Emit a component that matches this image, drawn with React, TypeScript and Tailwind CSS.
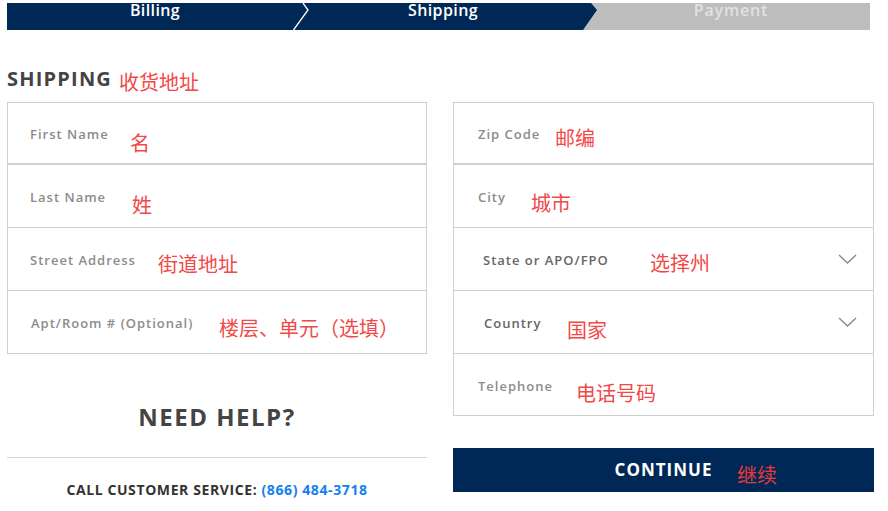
import React from 'react';

const font = { fontFamily: '"Open Sans", "Noto Sans CJK SC", sans-serif' };
const cnFont = { fontFamily: '"Noto Sans CJK SC", sans-serif' };

type Field = {
  label: string;
  cn: string;
  labelW: string;
  shift: string;
  rowClass: string;
  pad: string;
  dark?: boolean;
  select?: boolean;
};

const leftFields: Field[] = [
  { label: 'First Name', cn: '名', labelW: 'w-[100px]', shift: 'translate-y-[10px]', rowClass: 'h-[62px] border-b-2', pad: 'pl-[22px]' },
  { label: 'Last Name', cn: '姓', labelW: 'w-[102px]', shift: 'translate-y-[9px]', rowClass: 'h-[63px] border-b', pad: 'pl-[22px]' },
  { label: 'Street Address', cn: '街道地址', labelW: 'w-[128px]', shift: 'translate-y-[5px]', rowClass: 'h-[63px] border-b', pad: 'pl-[22px]' },
  { label: 'Apt/Room # (Optional)', cn: '楼层、单元（选填）', labelW: 'w-[188px]', shift: 'translate-y-[6px]', rowClass: 'h-[62px]', pad: 'pl-[23px]' },
];

const rightFields: Field[] = [
  { label: 'Zip Code', cn: '邮编', labelW: 'w-[77px]', shift: 'translate-y-[5px]', rowClass: 'h-[62px] border-b-2', pad: 'pl-[24px]' },
  { label: 'City', cn: '城市', labelW: 'w-[53px]', shift: 'translate-y-[7px]', rowClass: 'h-[63px] border-b', pad: 'pl-[24px]' },
  { label: 'State or APO/FPO', cn: '选择州', labelW: 'w-[167px]', shift: 'translate-y-[4px]', rowClass: 'h-[63px] border-b', pad: 'pl-[29px]', dark: true, select: true },
  { label: 'Country', cn: '国家', labelW: 'w-[83px]', shift: 'translate-y-[8px]', rowClass: 'h-[63px] border-b', pad: 'pl-[30px]', dark: true, select: true },
  { label: 'Telephone', cn: '电话号码', labelW: 'w-[98px]', shift: 'translate-y-[8px]', rowClass: 'h-[61px]', pad: 'pl-[24px]' },
];

function Chevron() {
  return (
    <svg width="19" height="10" viewBox="0 0 19 10" className="absolute right-[16px] top-1/2 -translate-y-1/2">
      <polyline points="1,1 9.5,9 18,1" fill="none" stroke="#8a8a8a" strokeWidth="1.4" />
    </svg>
  );
}

function FieldRow({ f }: { f: Field }) {
  return (
    <div className={`relative flex items-center border-[#cfcfcf] ${f.rowClass} ${f.pad}`}>
      <span
        className={`${f.labelW} shrink-0 translate-y-[2px] whitespace-nowrap text-[13px] font-semibold tracking-[1px] ${f.dark ? 'text-[#666]' : 'text-[#8c8c8c]'}`}
      >
        {f.label}
      </span>
      <span className={`text-[20px] leading-none text-[#f24848] ${f.shift}`} style={cnFont}>
        {f.cn}
      </span>
      {f.select && <Chevron />}
    </div>
  );
}

function Steps() {
  return (
    <div className="relative ml-[7px] mt-[3px] flex h-[27px] w-[863px] bg-[#002856] text-[16px] font-semibold leading-[14px] tracking-[0.4px]">
      <div className="w-[296px] text-center text-white">Billing</div>
      <div className="w-[280px] text-center text-white">Shipping</div>
      <div className="flex-1 bg-[#bdbdbd] pl-[9px] text-center tracking-[0.8px] text-[#e2e2e2] [clip-path:polygon(8px_0,100%_0,100%_100%,0_100%,14px_7px)]">
        Payment
      </div>
      <svg width="17" height="27" viewBox="0 0 17 27" className="absolute left-[286px] top-0">
        <polyline points="10,0 15,7 0.5,27" fill="none" stroke="#ffffff" strokeWidth="1.3" />
      </svg>
    </div>
  );
}

export default function App() {
  return (
    <div className="h-[511px] w-[888px] overflow-hidden bg-white" style={font}>
      <Steps />

      <div className="ml-[7px] mt-[35px] flex h-[28px] items-center">
        <h2 className="text-[20px] font-bold tracking-[1.2px] text-[#444]">SHIPPING</h2>
        <span className="ml-[7px] translate-y-[3px] text-[20px] leading-none text-[#f24848]" style={cnFont}>
          收货地址
        </span>
      </div>

      <div className="mt-[9px] flex gap-[26px] px-[7px]">
        <div className="w-[420px]">
          <div className="border border-[#cfcfcf]">
            {leftFields.map((f) => (
              <FieldRow key={f.label} f={f} />
            ))}
          </div>
          <p className="mt-[51px] text-center text-[24px] font-bold leading-[24px] tracking-[1.5px] text-[#444]">
            NEED HELP?
          </p>
          <div className="mt-[28px] h-px bg-[#d2d2d2]" />
          <p className="mt-[24px] text-center text-[14px] font-bold leading-[16px] tracking-[0.6px] text-[#333]">
            CALL CUSTOMER SERVICE: <span className="text-[#1480f0]">(866) 484-3718</span>
          </p>
        </div>

        <div className="w-[421px]">
          <div className="border border-[#cfcfcf]">
            {rightFields.map((f) => (
              <FieldRow key={f.label} f={f} />
            ))}
          </div>
          <button className="relative mt-[32px] flex h-[44px] w-full items-center justify-center bg-[#002856]">
            <span className="text-[17px] font-bold tracking-[1px] text-white">CONTINUE</span>
            <span className="absolute left-[284px] top-[17px] text-[20px] leading-none text-[#e8383a]" style={cnFont}>
              继续
            </span>
          </button>
        </div>
      </div>
    </div>
  );
}
